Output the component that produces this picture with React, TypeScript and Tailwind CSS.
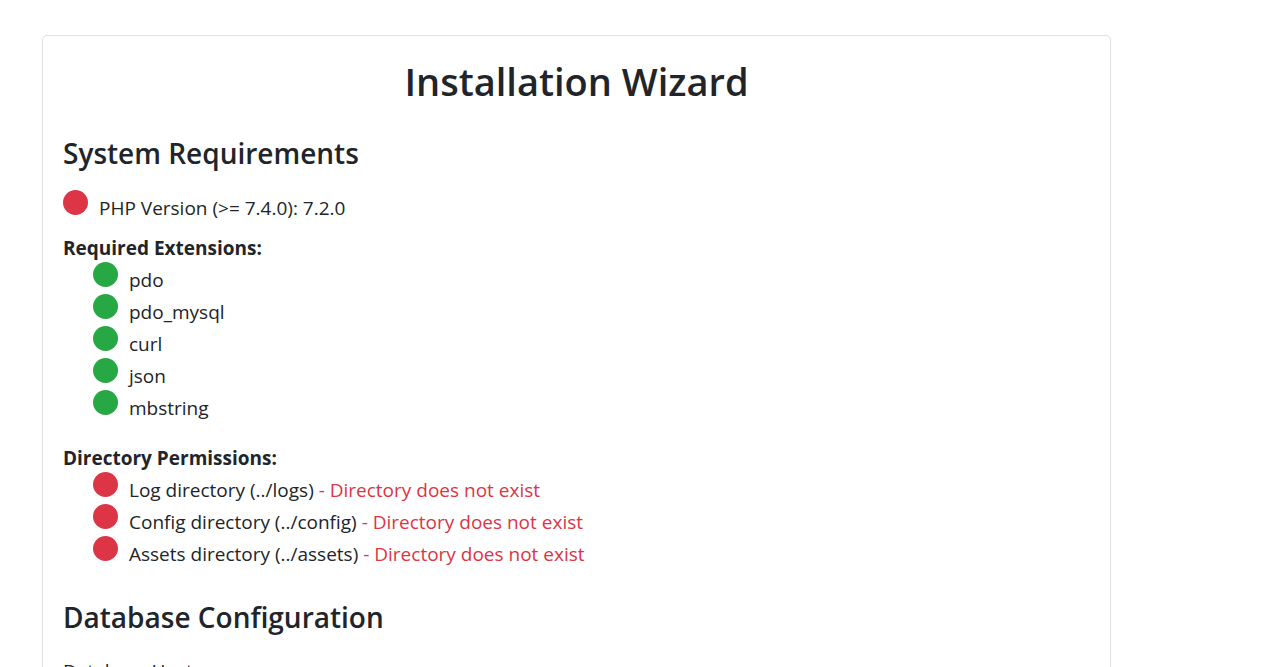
type Status = "ok" | "error";

const extensions = ["pdo", "pdo_mysql", "curl", "json", "mbstring"];

const directories = [
  "Log directory (../logs)",
  "Config directory (../config)",
  "Assets directory (../assets)",
];

function Dot({ status }: { status: Status }) {
  return (
    <span
      aria-hidden="true"
      className={`size-[25px] shrink-0 rounded-full ${status === "ok" ? "bg-[#28a745]" : "bg-[#dc3545]"}`}
    />
  );
}

function Check({ status, label, error }: { status: Status; label: string; error?: string }) {
  return (
    <div className="flex h-8 items-start gap-[11px]">
      <Dot status={status} />
      <p className="pt-[3px]">
        {label}
        {error && <span className="text-[#dc3545]"> - {error}</span>}
      </p>
    </div>
  );
}

export default function App() {
  return (
    <main className="flex h-screen flex-col overflow-hidden bg-white pt-[35px] pr-[153px] pl-[42px] font-['Open_Sans','Noto_Sans',sans-serif] text-[19px] leading-[30px] text-[#212529]">
      <section className="shrink-0 rounded-[5px] border border-[#dfdfdf] px-5 pt-[21px] pb-5">
        <h1 className="mb-[30px] text-center text-[38px] leading-[48px] font-semibold">Installation Wizard</h1>

        <h2 className="mb-[19px] text-[28px] leading-9 font-semibold">System Requirements</h2>
        <Check status="error" label="PHP Version (>= 7.4.0): 7.2.0" />

        <h3 className="mt-3 leading-7 font-bold">Required Extensions:</h3>
        <ul className="pl-[30px]">
          {extensions.map((name) => (
            <li key={name}>
              <Check status="ok" label={name} />
            </li>
          ))}
        </ul>

        <h3 className="mt-[22px] leading-7 font-bold">Directory Permissions:</h3>
        <ul className="pl-[30px]">
          {directories.map((name) => (
            <li key={name}>
              <Check status="error" label={name} error="Directory does not exist" />
            </li>
          ))}
        </ul>

        <form>
          <h2 className="mt-[31px] mb-[21px] text-[28px] leading-9 font-semibold">Database Configuration</h2>
          <label htmlFor="db-host" className="mb-2 block">
            Database Host
          </label>
          <input id="db-host" name="db-host" type="text" className="w-full rounded border border-[#ced4da] px-4 py-2" />
        </form>
      </section>
    </main>
  );
}
